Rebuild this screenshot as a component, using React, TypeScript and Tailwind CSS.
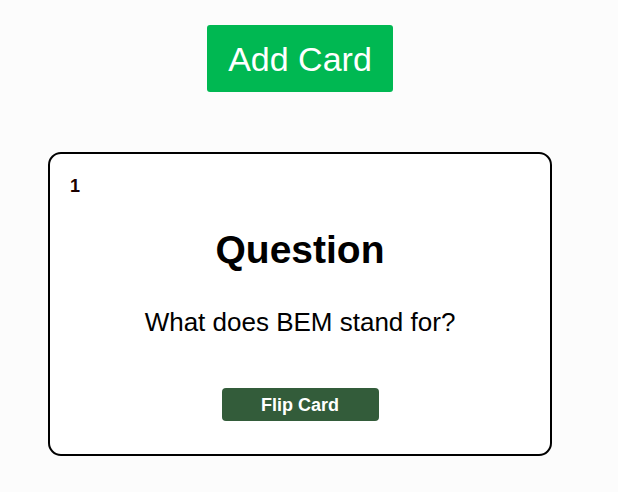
export default function App() {
  return (
    <div className="min-h-[492px] w-full bg-[#fcfcfc] font-['Liberation_Sans',Arial,sans-serif]">
      <div className="flex w-[600px] flex-col items-center pt-[25px]">
        {/* Add button */}
        <button className="h-[67px] w-[186px] rounded-[3px] bg-[#00b852] text-[34px] leading-none text-white">
          Add Card
        </button>

        {/* Card */}
        <div className="mt-[60px] flex h-[304px] w-[504px] flex-col rounded-[13px] border-2 border-black bg-white px-5">
          <div className="pt-[23px] text-[18px] font-bold leading-none text-[#1a0000]">1</div>
          <h2 className="mt-[35px] text-center text-[39px] font-bold leading-none text-black">Question</h2>
          <p className="mt-[40px] text-center text-[26px] leading-none text-black">What does BEM stand for?</p>
          <div className="mt-[53px] flex justify-center">
            <button className="h-[33px] w-[157px] rounded-[4px] bg-[#335c3a] text-[18px] font-bold leading-none text-white">
              Flip Card
            </button>
          </div>
        </div>
      </div>
    </div>
  )
}
